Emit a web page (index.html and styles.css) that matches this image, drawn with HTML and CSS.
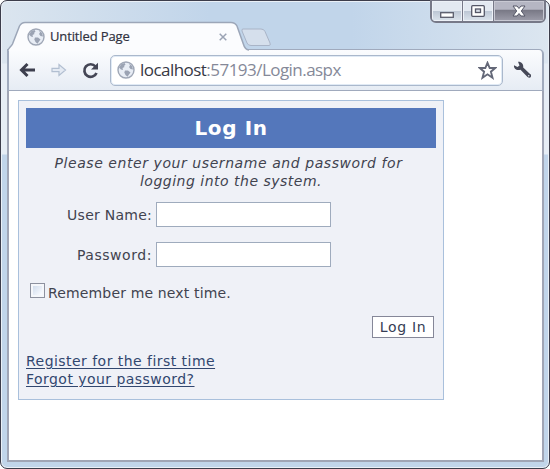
FILE: index.html
```html
<!DOCTYPE html>
<html lang="en">
<head>
<meta charset="utf-8">
<title>Untitled Page</title>
<link rel="stylesheet" href="styles.css">
</head>
<body>
<svg width="0" height="0" class="defs">
  <symbol id="globe" viewBox="0 0 18 18">
    <circle cx="9" cy="9" r="8" fill="#e8edf5" stroke="#9fa7b6" stroke-width="1.400"/>
    <path d="M2 6.500 4.500 3 7.500 2 8.500 3.500 7 5 7.500 6 5.500 7 6 9 4 8.500Z M8 9.500 11 9.500 13.500 11.500 12 13.500 10.500 15.800 8.500 14 7.300 11.500Z M12 2.500 15 5 16 8.500 13.500 8 12 6 13 4.500Z" fill="#9ba3b3"/>
  </symbol>
</svg>
<div class="window">
  <header class="titlebar">
    <div class="tab">
      <svg class="tab-shape" width="242" height="30" viewBox="0 0 242 30"><path d="M.8 30C1.200 27 4 26 5.500 23L12.500 5Q14.500 1.500 18 1.500H224Q228 1.500 230 5L236 22Q238 29 242 29V30Z" fill="#fbfcfe"/><path d="M.8 30C1.200 27 4 26 5.500 23L12.500 5Q14.500 1.500 18 1.500H224Q228 1.500 230 5L236 22Q238 29 242 29" fill="none" stroke="#9ca6b8" stroke-width="1.5"/></svg>
      <svg class="tab-icon" width="18" height="18"><use href="#globe"/></svg>
      <span class="tab-title">Untitled Page</span>
      <svg class="tab-close" width="8" height="8" viewBox="0 0 8 8"><path d="M.7.7 7.300 7.300M7.300.7.700 7.300" stroke="#9ba3b4" stroke-width="1.5"/></svg>
    </div>
    <svg class="new-tab" width="31" height="19" viewBox="0 0 31 19"><path d="M2 1H20Q23 1 24 3.500L29 15Q30 17.500 28 17.500H10Q7 17.500 6 15L1 3Q.5 1 2 1Z" fill="#d5dfec" stroke="#a9b4c7"/></svg>
    <div class="controls">
      <span class="control"><svg width="14" height="6"><rect x=".7" y=".7" width="12.600" height="4.600" fill="#fff" stroke="#5a5c6c" stroke-width="1.300"/></svg></span>
      <span class="control max"><svg width="14" height="12" viewBox="0 0 14 12"><rect x=".7" y=".7" width="12.600" height="10.600" rx="1" fill="#fff" stroke="#555767" stroke-width="1.300"/><rect x="4.500" y="4" width="5" height="3.500" fill="#d9dee8" stroke="#555767" stroke-width="1.300"/></svg></span>
      <span class="control close"><svg width="14" height="12" viewBox="0 0 14 12"><path d="M1 1H5L7 3.500 9 1H13L9.300 6 13 11H9L7 8.500 5 11H1L4.700 6Z" fill="#fff" stroke="#555767"/></svg></span>
    </div>
  </header>
  <nav class="toolbar">
    <svg class="back" width="17" height="16" viewBox="0 0 17 16"><path d="M16 8H3M8.500 2 2.500 8 8.500 14" fill="none" stroke="#3d3f4e" stroke-width="3"/></svg>
    <svg class="forward" width="16" height="14" viewBox="0 0 16 14"><path d="M1 5.300H8V1.500L14.500 7 8 12.500V8.700H1Z" fill="#e4eaf3" stroke="#b2bfd1" stroke-width="1.200"/></svg>
    <svg class="reload" width="17" height="17" viewBox="0 0 17 17"><path d="M13.500 4.500A6.300 6.300 0 1 0 14.500 11" fill="none" stroke="#444655" stroke-width="2.700"/><path d="M16 .7V7.500H9Z" fill="#444655"/></svg>
    <div class="omnibox">
      <svg width="18" height="18"><use href="#globe"/></svg>
      <span class="url"><b>localhost</b>:57193/Login.aspx</span>
      <svg class="star" width="19" height="19" viewBox="0 0 19 19"><path d="M9.500 1.800 11.700 7H17.200L12.900 10.700 14.500 16.700 9.500 13.300 4.500 16.700 6.100 10.700 1.800 7H7.300Z" fill="#fff" stroke="#646878" stroke-width="1.900"/></svg>
    </div>
    <svg class="wrench" width="19" height="18" viewBox="0 0 19 18"><path d="M5 .7 6.500 4.500 4.500 6 1 4.300C.5 8 4 10 7.500 8.700L14.500 16Q17 17.700 18 15.500 18.800 13.500 16.500 12.500L10.200 6.500C10.700 3 8.500.5 5 .7Z" fill="#464958"/><circle cx="15.700" cy="14.700" r=".8" fill="#d9dde6"/></svg>
  </nav>
  <main class="page">
    <form class="login">
      <h1>Log In</h1>
      <p class="intro">Please enter your username and password for<br><span>logging into the system.</span></p>
      <div class="row"><label for="user">User Name:</label><input id="user" type="text"></div>
      <div class="row"><label class="wide" for="pass">Password:</label><input id="pass" type="password"></div>
      <label class="remember"><input type="checkbox"><span>Remember me next time.</span></label>
      <button type="button">Log In</button>
      <div class="links"><a href="#">Register for the first time</a><a href="#">Forgot your password?</a></div>
    </form>
  </main>
</div>
</body>
</html>
```
FILE: styles.css
```css
* { box-sizing: border-box; }
body { margin: 0; background: #fff; overflow: hidden; }
svg { display: block; flex: none; }
.defs { position: absolute; }
.window {
  width: 550px;
  height: 469px;
  padding: 0 5px 6px 6px;
  border: 1px solid #3c3d4b;
  border-radius: 7px;
  background: linear-gradient(180deg, transparent 0 62px, #e6edf5 63px 153px, #c1d5ea 154px), linear-gradient(90deg, #dbe5ef, #c1d5ea 38%, #c1d5ea 64%, #dce6f0);
  box-shadow: inset 0 0 0 1px #eaf0f7;
}
.titlebar { display: flex; height: 48px; }
.tab {
  position: relative;
  display: flex;
  align-items: center;
  width: 236px;
  height: 29px;
  margin-top: 20px;
  padding: 2px 0 0 20px;
}
.tab-shape { position: absolute; left: 0; top: 0; z-index: 1; }
.tab-icon, .tab-title, .tab-close { position: relative; z-index: 2; }
.tab-title {
  margin: -2px 0 0 5px;
  font: 13px/18px "Open Sans", sans-serif;
  letter-spacing: -0.13px;
  color: #30323f;
  white-space: nowrap;
  -webkit-text-stroke: 0.2px #30323f;
}
.tab-close { margin: 0 16px 0 auto; }
.new-tab { margin: 27px 0 0 -2px; }
.controls {
  display: flex;
  width: 116px;
  height: 23px;
  margin: -1px -2px 0 auto;
  border: 2px solid #777988;
  border-top-width: 1px;
  border-radius: 0 0 6px 6px;
  overflow: hidden;
}
.control {
  display: flex;
  align-items: center;
  justify-content: center;
  width: 31px;
  border-right: 1px solid #777988;
  background: linear-gradient(#e3e9f1 48%, #bcc6d4 50%, #dce4ed);
  box-shadow: inset 0 0 0 1px #edf1f7;
}
.control:first-child { padding-top: 7px; }
.close {
  flex: 1;
  border: 0;
  background: linear-gradient(#b5b6c3 42%, #777784 44%, #9d9daa);
  box-shadow: inset 0 0 0 1px #c8c9d3;
}
.toolbar {
  display: flex;
  align-items: center;
  height: 42px;
  padding-left: 10px;
  border: 1px solid #a0aabd;
  border-width: 1px 2px;
  border-radius: 0 5px 0 0;
  background: linear-gradient(#fbfcfe, #e6ecf4);
}
.forward { margin-left: 15px; }
.reload { margin-left: 15px; }
.omnibox {
  display: flex;
  align-items: center;
  width: 393px;
  height: 31px;
  margin-left: 11px;
  padding: 0 5px 0 6px;
  border: 1px solid #aab8cc;
  border-radius: 5px;
  background: #fff;
  box-shadow: inset 0 0 0 1px #e0eaf5;
}
.url {
  margin-left: 5px;
  font: 17px/24px "Open Sans", sans-serif;
  letter-spacing: -0.54px;
  color: #858998;
  white-space: nowrap;
}
.url b { font-weight: 400; color: #363844; }
.star { margin-left: auto; }
.wrench { margin-left: 10px; }
.page {
  height: 371px;
  padding: 9px 9px 10px;
  border: 2px solid #a0a5b5;
  border-top: 0;
  background: #fff;
}
.login {
  display: flex;
  flex-direction: column;
  width: 426px;
  height: 300px;
  padding: 7px;
  border: 1px solid #a9c0dc;
  background: #eff1f7;
  font: 14px/18px "DejaVu Sans", sans-serif;
  color: #41434f;
}
h1 {
  height: 40px;
  margin: 0;
  background: #5477bb;
  color: #fff;
  font-size: 20px;
  line-height: 40px;
  letter-spacing: 0.6px;
  text-align: center;
}
.intro {
  margin: 6px 0 12px;
  padding-right: 5px;
  font-style: italic;
  letter-spacing: 0.57px;
  text-align: center;
  white-space: nowrap;
}
.intro span { padding-left: 5px; letter-spacing: 0.5px; }
.row { display: flex; align-items: center; height: 25px; margin-bottom: 15px; }
.row label { width: 126px; margin-right: 4px; letter-spacing: 0.25px; text-align: right; white-space: nowrap; }
.row .wide { letter-spacing: 0.55px; }
.row input {
  width: 175px;
  height: 25px;
  padding: 0 4px;
  border: 1px solid #9fabbd;
  background: #fff;
}
.remember { display: flex; align-items: center; height: 18px; margin-top: 2px; padding-left: 4px; letter-spacing: 0.15px; }
.remember input {
  appearance: none;
  width: 15px;
  height: 15px;
  margin: -5px 3px 0 0;
  border: 1px solid #8d919f;
  background: linear-gradient(135deg, #c8d6e8, #f8faff 80%);
  box-shadow: inset 0 0 0 2px #f5f7fb;
}
button {
  align-self: flex-end;
  width: 62px;
  height: 22px;
  margin: 14px 2px 0 0;
  padding: 0;
  border: 1px solid #858798;
  background: #fff;
  font: inherit;
  letter-spacing: 0.7px;
  color: #363d55;
}
.links { display: flex; flex-direction: column; align-items: flex-start; margin-top: 14px; }
.links a { color: #32476f; letter-spacing: 0.46px; text-decoration: underline; text-underline-offset: 2px; white-space: nowrap; }
```
